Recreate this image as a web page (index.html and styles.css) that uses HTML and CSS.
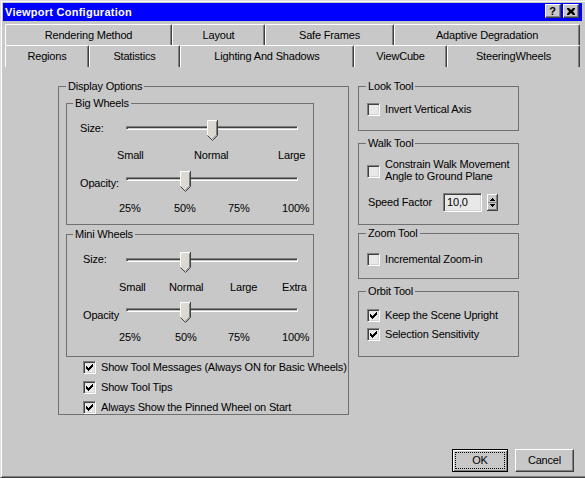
FILE: index.html
```html
<!DOCTYPE html>
<html>
<head>
<meta charset="utf-8">
<title>Viewport Configuration</title>
<link rel="stylesheet" href="styles.css">
</head>
<body>
<div class="window">
  <div class="titlebar">
    <span class="title">Viewport Configuration</span>
    <div class="caption-btns">
      <span class="cap-btn cap-help">?</span>
      <span class="cap-btn cap-close"><svg width="8" height="7" viewBox="0 0 8 7"><path d="M0 0h2l2 2 2-2h2v1L6 3.5 8 6v1H6L4 5 2 7H0V6l2-2.5L0 1z" fill="#000"/></svg></span>
    </div>
  </div>

  <div class="tabs">
    <div class="tab-row row1">
      <div class="tab t-render">Rendering Method</div>
      <div class="tab t-layout">Layout</div>
      <div class="tab t-safe">Safe Frames</div>
      <div class="tab t-adapt">Adaptive Degradation</div>
    </div>
    <div class="tab-row row2">
      <div class="tab t-regions">Regions</div>
      <div class="tab t-stats">Statistics</div>
      <div class="tab t-light">Lighting And Shadows</div>
      <div class="tab t-cube">ViewCube</div>
      <div class="tab t-steer selected">SteeringWheels</div>
    </div>
  </div>

  <div class="content">
    <fieldset class="group display">
      <legend class="lg-display">Display Options</legend>

      <fieldset class="group wheels big">
        <legend class="lg-wheels">Big Wheels</legend>
        <div class="slider-row">
          <span class="s-label lbl-size-big">Size:</span>
          <div class="track-wrap">
            <div class="track"></div>
            <svg class="thumb" style="left:81px" width="11" height="21" viewBox="0 0 11 21"><path d="M0.5 0.5H10.5V15.5L5.5 20.5L0.5 15.5Z" fill="#dcd9d2"/><path d="M0.5 15.5V0.5H10" fill="none" stroke="#fff"/><path d="M10.5 0V15.5L5.5 20.5L0.5 15.5" fill="none" stroke="#404040"/><path d="M9.5 1.5V15L5.5 19" fill="none" stroke="#808080"/></svg>
          </div>
        </div>
        <div class="scale scale-big">
          <span>Small</span><span>Normal</span><span>Large</span>
        </div>
        <div class="slider-row row-gap">
          <span class="s-label lbl-op-big">Opacity:</span>
          <div class="track-wrap">
            <div class="track"></div>
            <svg class="thumb" style="left:54px" width="11" height="21" viewBox="0 0 11 21"><path d="M0.5 0.5H10.5V15.5L5.5 20.5L0.5 15.5Z" fill="#dcd9d2"/><path d="M0.5 15.5V0.5H10" fill="none" stroke="#fff"/><path d="M10.5 0V15.5L5.5 20.5L0.5 15.5" fill="none" stroke="#404040"/><path d="M9.5 1.5V15L5.5 19" fill="none" stroke="#808080"/></svg>
          </div>
        </div>
        <div class="scale pct-big">
          <span>25%</span><span>50%</span><span>75%</span><span>100%</span>
        </div>
      </fieldset>

      <fieldset class="group wheels mini">
        <legend class="lg-wheels">Mini Wheels</legend>
        <div class="slider-row">
          <span class="s-label lbl-size-mini">Size:</span>
          <div class="track-wrap">
            <div class="track"></div>
            <svg class="thumb" style="left:54px" width="11" height="21" viewBox="0 0 11 21"><path d="M0.5 0.5H10.5V15.5L5.5 20.5L0.5 15.5Z" fill="#dcd9d2"/><path d="M0.5 15.5V0.5H10" fill="none" stroke="#fff"/><path d="M10.5 0V15.5L5.5 20.5L0.5 15.5" fill="none" stroke="#404040"/><path d="M9.5 1.5V15L5.5 19" fill="none" stroke="#808080"/></svg>
          </div>
        </div>
        <div class="scale scale-mini">
          <span>Small</span><span>Normal</span><span>Large</span><span>Extra</span>
        </div>
        <div class="slider-row row-gap-mini">
          <span class="s-label lbl-op-mini">Opacity</span>
          <div class="track-wrap">
            <div class="track"></div>
            <svg class="thumb" style="left:54px" width="11" height="21" viewBox="0 0 11 21"><path d="M0.5 0.5H10.5V15.5L5.5 20.5L0.5 15.5Z" fill="#dcd9d2"/><path d="M0.5 15.5V0.5H10" fill="none" stroke="#fff"/><path d="M10.5 0V15.5L5.5 20.5L0.5 15.5" fill="none" stroke="#404040"/><path d="M9.5 1.5V15L5.5 19" fill="none" stroke="#808080"/></svg>
          </div>
        </div>
        <div class="scale pct-mini">
          <span>25%</span><span>50%</span><span>75%</span><span>100%</span>
        </div>
      </fieldset>

      <div class="checks display-checks">
        <label class="check"><span class="box checked"><svg width="7" height="7" viewBox="0 0 7 7"><path d="M0 2h1v3H0zM1 3h1v3H1zM2 4h1v3H2zM3 3h1v3H3zM4 2h1v3H4zM5 1h1v3H5zM6 0h1v3H6z" fill="#000"/></svg></span><span>Show Tool Messages (Always ON for Basic Wheels)</span></label>
        <label class="check"><span class="box checked"><svg width="7" height="7" viewBox="0 0 7 7"><path d="M0 2h1v3H0zM1 3h1v3H1zM2 4h1v3H2zM3 3h1v3H3zM4 2h1v3H4zM5 1h1v3H5zM6 0h1v3H6z" fill="#000"/></svg></span><span>Show Tool Tips</span></label>
        <label class="check"><span class="box checked"><svg width="7" height="7" viewBox="0 0 7 7"><path d="M0 2h1v3H0zM1 3h1v3H1zM2 4h1v3H2zM3 3h1v3H3zM4 2h1v3H4zM5 1h1v3H5zM6 0h1v3H6z" fill="#000"/></svg></span><span>Always Show the Pinned Wheel on Start</span></label>
      </div>
    </fieldset>

    <div class="right">
      <fieldset class="group tool look">
        <legend class="lg-tool">Look Tool</legend>
        <label class="check"><span class="box"></span><span>Invert Vertical Axis</span></label>
      </fieldset>

      <fieldset class="group tool walk">
        <legend class="lg-tool">Walk Tool</legend>
        <label class="check check-multi"><span class="box"></span><span class="multi">Constrain Walk Movement<br>Angle to Ground Plane</span></label>
        <div class="speed-row">
          <span class="speed-label">Speed Factor</span>
          <span class="edit">10,0</span>
          <svg class="spinner" width="11" height="17" viewBox="0 0 11 17">
            <rect x="0" y="0" width="11" height="17" fill="#c8c8c8"/>
            <path d="M0.5 16.5V0.5H10" fill="none" stroke="#fff"/>
            <path d="M0 16.5H10.5V0" fill="none" stroke="#404040"/>
            <path d="M1 15.5H9.5V1" fill="none" stroke="#808080"/>
            <path d="M1 8.5H9.5" fill="none" stroke="#808080"/>
            <path d="M4 6h3v-1h-1v-1h-1v1h-1z M3 6h5v1h-5z" fill="#000"/>
            <path d="M3 10h5v1h-5z M4 11h3v1h-3z M5 12h1v1h-1z" fill="#000"/>
          </svg>
        </div>
      </fieldset>

      <fieldset class="group tool zoomtool">
        <legend class="lg-tool">Zoom Tool</legend>
        <label class="check"><span class="box"></span><span>Incremental Zoom-in</span></label>
      </fieldset>

      <fieldset class="group tool orbit">
        <legend class="lg-tool">Orbit Tool</legend>
        <div class="checks orbit-checks">
          <label class="check"><span class="box checked"><svg width="7" height="7" viewBox="0 0 7 7"><path d="M0 2h1v3H0zM1 3h1v3H1zM2 4h1v3H2zM3 3h1v3H3zM4 2h1v3H4zM5 1h1v3H5zM6 0h1v3H6z" fill="#000"/></svg></span><span>Keep the Scene Upright</span></label>
          <label class="check"><span class="box checked"><svg width="7" height="7" viewBox="0 0 7 7"><path d="M0 2h1v3H0zM1 3h1v3H1zM2 4h1v3H2zM3 3h1v3H3zM4 2h1v3H4zM5 1h1v3H5zM6 0h1v3H6z" fill="#000"/></svg></span><span>Selection Sensitivity</span></label>
        </div>
      </fieldset>
    </div>
  </div>

  <div class="footer">
    <button class="btn btn-default"><span class="focus">OK</span></button>
    <button class="btn btn-cancel">Cancel</button>
  </div>
</div>
</body>
</html>
```

FILE: styles.css
```css
* { box-sizing: border-box; }

html, body {
  margin: 0;
  padding: 0;
}

body {
  width: 585px;
  height: 478px;
  overflow: hidden;
  background: #c8c8c8;
  font-family: "Liberation Sans", Arial, sans-serif;
  font-size: 11px;
  line-height: 13px;
  letter-spacing: -0.18px;
  color: #000;
}

.window {
  width: 585px;
  height: 478px;
  display: flex;
  flex-direction: column;
  background: #c8c8c8;
  border-top: 1px solid #dedede;
  border-left: 1px solid #dedede;
  border-bottom: 1px solid #404040;
  box-shadow: inset 1px 1px 0 #ffffff, inset 0 -1px 0 #808080;
  padding: 2px 3px 1px 2px;
}

/* Title bar */
.titlebar {
  height: 18px;
  flex: none;
  background: #0000ff;
  display: flex;
  align-items: center;
  justify-content: space-between;
  padding: 0 3px 0 2px;
}

.title {
  color: #fff;
  font-weight: bold;
  font-size: 11px;
  letter-spacing: 0.25px;
}

.caption-btns {
  display: flex;
  gap: 2px;
  margin-bottom: 2px;
}

.cap-btn {
  width: 16px;
  height: 14px;
  background: #c8c8c8;
  border-top: 1px solid #fff;
  border-left: 1px solid #fff;
  border-right: 1px solid #404040;
  border-bottom: 1px solid #404040;
  box-shadow: inset -1px -1px 0 #808080;
  display: flex;
  align-items: center;
  justify-content: center;
}

.cap-help {
  font-weight: bold;
  font-size: 11px;
  line-height: 12px;
  padding-right: 1px;
}

.cap-close svg { display: block; margin-right: 1px; }

/* Tabs */
.tabs {
  flex: none;
  margin: 3px 0 0 2px;
  width: 575px;
}

.tab-row {
  display: flex;
}

.row1 { height: 21px; }
.row2 { height: 22px; }

.tab {
  border-top: 1px solid #fff;
  border-left: 1px solid #fff;
  border-right: 1px solid #404040;
  box-shadow: inset -1px 0 0 #808080;
  border-radius: 2px 2px 0 0;
  display: flex;
  align-items: center;
  justify-content: center;
  white-space: nowrap;
  flex: none;
}

.t-render { width: 167px; }
.t-layout { width: 93px; }
.t-safe { width: 129px; }
.t-adapt { width: 186px; }
.t-regions { width: 84px; }
.t-stats { width: 91px; }
.t-light { width: 174px; }
.t-cube { width: 93px; }
.t-steer { width: 133px; }

/* Content */
.content {
  flex: 1;
  display: flex;
  align-items: flex-start;
  gap: 9px;
  padding: 13px 0 0 55px;
}

fieldset.group {
  margin: 0;
  padding: 0;
  border: 1px solid #707070;
  min-width: 0;
}

fieldset.group > legend {
  padding: 0 2px;
  line-height: 13px;
  height: 13px;
}

.lg-display { margin-left: 7px; }
.lg-wheels { margin-left: 6px; }
.lg-tool { margin-left: 7px; }

.display {
  width: 291px;
  padding-bottom: 4px;
}

.wheels {
  width: 248px;
  margin-left: 7px !important;
}

.big {
  margin-top: 4px !important;
  padding: 10px 0 9px 0 !important;
}

.mini {
  margin-top: 3px !important;
  padding: 11px 0 12px 0 !important;
}

/* Sliders */
.slider-row {
  display: flex;
  align-items: flex-start;
  height: 22px;
}

.big .slider-row { padding-left: 13px; }
.big .s-label { width: 46px; }
.mini .slider-row { padding-left: 16px; }
.mini .s-label { width: 43px; }

.s-label { flex: none; white-space: nowrap; }
.lbl-size-big { margin-top: 2px; }
.lbl-op-big { margin-top: 6px; }
.lbl-size-mini { margin-top: 1px; }
.lbl-op-mini { margin-top: 7px; }

.track-wrap {
  position: relative;
  width: 172px;
  height: 22px;
  flex: none;
}

.track {
  margin-top: 6px;
  height: 4px;
  width: 172px;
  border-top: 1px solid #808080;
  border-left: 1px solid #808080;
  border-bottom: 1px solid #fff;
  border-right: 1px solid #fff;
  box-shadow: inset 1px 1px 0 #404040;
  background: #c8c8c8;
}

.thumb {
  position: absolute;
  top: 0;
  display: block;
}

.scale {
  display: grid;
  height: 13px;
  white-space: nowrap;
}

.scale-big {
  margin-top: 7px;
  padding-left: 50px;
  grid-template-columns: 77px 84px auto;
}

.pct-big {
  margin-top: 9px;
  padding-left: 52px;
  grid-template-columns: 55px 54px 54px auto;
}

.row-gap { margin-top: 9px; }

.scale-mini {
  margin-top: 7px;
  padding-left: 52px;
  grid-template-columns: 50px 61px 52px auto;
}

.row-gap-mini { margin-top: 8px; }

.pct-mini {
  margin-top: 7px;
  padding-left: 52px;
  grid-template-columns: 56px 53px 54px auto;
}

/* Checkboxes */
.checks {
  display: flex;
  flex-direction: column;
}

.display-checks {
  margin: 4px 0 0 24px;
  gap: 7px;
}

.check {
  display: flex;
  align-items: flex-start;
  gap: 5px;
  white-space: nowrap;
}

.box {
  flex: none;
  width: 13px;
  height: 13px;
  border-top: 1px solid #808080;
  border-left: 1px solid #808080;
  border-bottom: 1px solid #fff;
  border-right: 1px solid #fff;
  box-shadow: inset 1px 1px 0 #404040, inset -1px -1px 0 #d4d4d4;
  background: #e8e8e8;
  padding: 2px 0 0 2px;
}

.box svg { display: block; }

/* Right column */
.right {
  display: flex;
  flex-direction: column;
  width: 161px;
}

.tool { width: 161px; }

.tool .check { margin-left: 8px; }

.look { padding: 10px 0 14px 0 !important; }

.walk {
  margin-top: 6px !important;
  padding: 8px 0 12px 0 !important;
}

.check-multi .box { margin-top: 7px; }
.multi { line-height: 12px; }

.speed-row {
  display: flex;
  align-items: center;
  margin: 11px 0 0 9px;
  height: 19px;
}

.speed-label {
  width: 75px;
  flex: none;
}

.edit {
  width: 39px;
  height: 19px;
  flex: none;
  border-top: 1px solid #808080;
  border-left: 1px solid #808080;
  border-bottom: 1px solid #fff;
  border-right: 1px solid #fff;
  box-shadow: inset 1px 1px 0 #404040, inset -1px -1px 0 #d4d4d4;
  background: #e8e8e8;
  padding: 2px 0 0 3px;
  line-height: 13px;
}

.spinner {
  display: block;
  margin-left: 5px;
  flex: none;
}

.zoomtool {
  margin-top: 2px !important;
  padding: 13px 0 12px 0 !important;
}

.orbit {
  margin-top: 6px !important;
  padding: 11px 0 15px 0 !important;
}

.orbit-checks { gap: 6px; }

/* Footer */
.footer {
  flex: none;
  display: flex;
  justify-content: flex-end;
  gap: 7px;
  padding-right: 8px;
  margin-bottom: 4px;
}

.btn {
  height: 23px;
  margin: 0;
  padding: 0;
  font-family: "Liberation Sans", Arial, sans-serif;
  font-size: 11px;
  line-height: 13px;
  letter-spacing: -0.18px;
  color: #000;
  background: #c8c8c8;
  display: flex;
  align-items: center;
  justify-content: center;
}

.btn-default {
  width: 56px;
  border: 1px solid #000;
  box-shadow: inset 1px 1px 0 #fff, inset -1px -1px 0 #808080;
  padding: 2px;
}

.focus {
  display: flex;
  align-items: center;
  justify-content: center;
  width: 100%;
  height: 100%;
  border: 1px dotted #000;
}

.btn-cancel {
  width: 59px;
  border-top: 1px solid #fff;
  border-left: 1px solid #fff;
  border-right: 1px solid #404040;
  border-bottom: 1px solid #404040;
  box-shadow: inset -1px -1px 0 #808080;
}
```
